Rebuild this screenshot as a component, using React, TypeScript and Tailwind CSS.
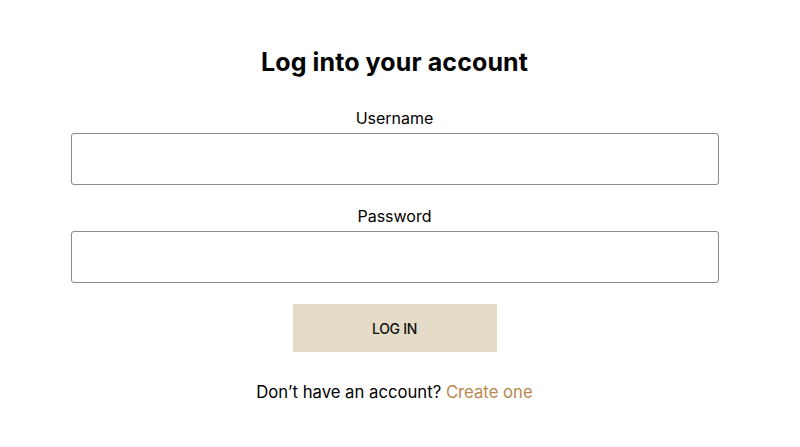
import { useState } from 'react';

const font = { fontFamily: 'Inter, "Noto Sans", sans-serif' };

const App = () => {
    const [username, setUsername] = useState('');
    const [password, setPassword] = useState('');

    return (
        <div className="min-h-[447px] w-[789px] bg-white text-black" style={font}>
            <form
                className="mx-auto flex w-[648px] flex-col items-center pt-[46px]"
                onSubmit={(e) => e.preventDefault()}
            >
                <h1 className="text-[25px] leading-[32px] font-bold tracking-[0.1px]">Log into your account</h1>

                <label htmlFor="username" className="mt-[30px] text-[16px] leading-[20px]">
                    Username
                </label>
                <input
                    id="username"
                    value={username}
                    onChange={(e) => setUsername(e.target.value)}
                    className="mt-[5px] h-[52px] w-full rounded-[3px] border border-[#8a8a8a] px-3 outline-none"
                />

                <label htmlFor="password" className="mt-[21px] text-[16px] leading-[20px]">
                    Password
                </label>
                <input
                    id="password"
                    type="password"
                    value={password}
                    onChange={(e) => setPassword(e.target.value)}
                    className="mt-[5px] h-[52px] w-full rounded-[3px] border border-[#8a8a8a] px-3 outline-none"
                />

                <button
                    type="submit"
                    className="mt-[21px] h-[48px] w-[204px] bg-[#e5dcc7] text-[14px] font-medium tracking-[-0.3px] text-[#111]"
                >
                    LOG IN
                </button>

                <p className="mt-[28px] text-[16.7px] leading-[24px]">
                    Don’t have an account?{' '}
                    <a href="#" className="text-[#b8894f]">
                        Create one
                    </a>
                </p>
            </form>
        </div>
    );
};

export default App;
